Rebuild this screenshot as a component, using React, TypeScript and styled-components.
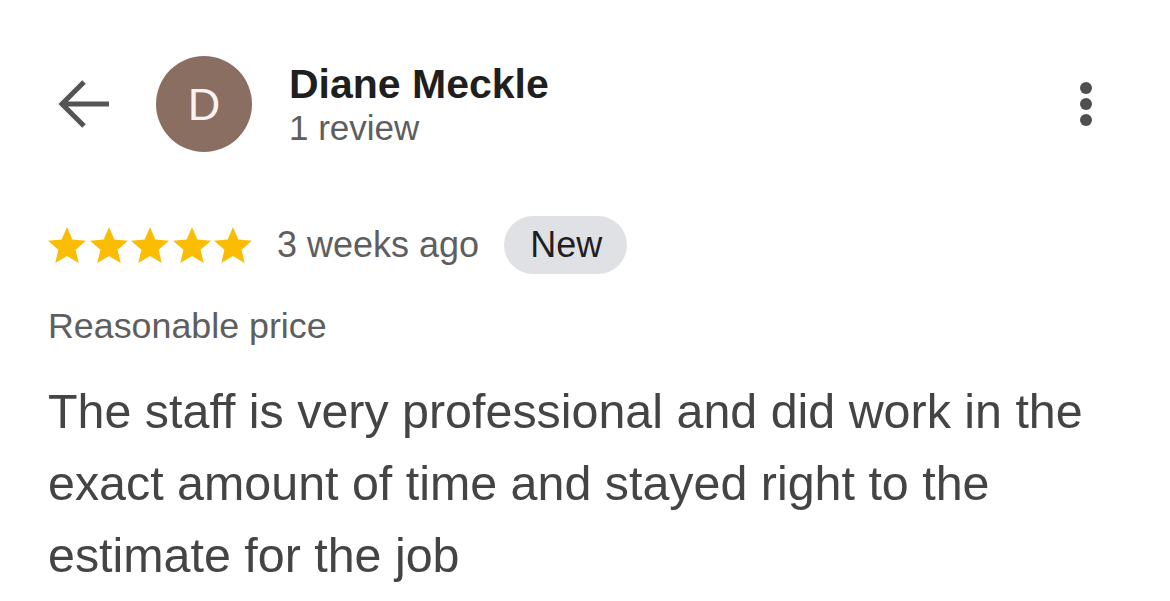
import React from 'react';
import styled, { createGlobalStyle } from 'styled-components';

const GlobalStyle = createGlobalStyle`
  html, body {
    margin: 0;
    padding: 0;
    background: #ffffff;
  }
  body {
    font-family: 'Liberation Sans', Arial, Helvetica, sans-serif;
  }
`;

const Page = styled.div`
  width: 1170px;
  height: 601px;
  overflow: hidden;
  background: #ffffff;
  box-sizing: border-box;
  padding: 56px 0 0 48px;
`;

const Header = styled.header`
  display: flex;
  align-items: center;
  height: 96px;
  padding-right: 72px;
`;

const BackButton = styled.button`
  display: flex;
  align-items: center;
  justify-content: center;
  width: 72px;
  height: 72px;
  padding: 0;
  margin-right: 36px;
  border: none;
  background: none;
  color: #545454;
`;

const Avatar = styled.div`
  flex: none;
  display: flex;
  align-items: center;
  justify-content: center;
  width: 96px;
  height: 96px;
  border-radius: 50%;
  background: #8b6e62;
  color: #f8f3f0;
  font-size: 45px;
  line-height: 1;
`;

const Who = styled.div`
  display: flex;
  flex-direction: column;
  margin-left: 37px;
`;

const Name = styled.div`
  font-size: 41px;
  line-height: 48px;
  font-weight: 700;
  color: #1f1f1f;
`;

const Count = styled.div`
  font-size: 35px;
  line-height: 40px;
  color: #5e5e5e;
`;

const MoreButton = styled.button`
  margin-left: auto;
  display: flex;
  flex-direction: column;
  align-items: center;
  gap: 4px;
  width: 24px;
  padding: 0;
  border: none;
  background: none;
`;

const Dot = styled.span`
  width: 12px;
  height: 12px;
  border-radius: 50%;
  background: #4f4f4f;
`;

const MetaRow = styled.div`
  display: flex;
  align-items: center;
  margin-top: 64px;
  height: 58px;
`;

const Stars = styled.div`
  display: flex;
  gap: 3.5px;
  margin-right: 25px;
`;

const When = styled.span`
  font-size: 36px;
  line-height: 40px;
  color: #5e5e5e;
  margin-right: 25px;
`;

const Chip = styled.span`
  display: inline-flex;
  align-items: center;
  height: 58px;
  padding: 0 25px 0 26px;
  border-radius: 29px;
  background: #dfe1e5;
  color: #1f1f1f;
  font-size: 36px;
`;

const Tag = styled.div`
  margin-top: 30px;
  font-size: 35.8px;
  line-height: 44px;
  color: #5e5e5e;
`;

const Body = styled.p`
  margin: 27px 0 0;
  padding-right: 48px;
  font-size: 48.4px;
  line-height: 72px;
  color: #444444;
`;

function Star() {
  return (
    <svg width="38" height="36" viewBox="2 2 20 19" aria-hidden>
      <path
        fill="#fbbc04"
        d="M12 17.27L18.18 21l-1.64-7.03L22 9.24l-7.19-.61L12 2 9.19 8.63 2 9.24l5.46 4.73L5.82 21z"
      />
    </svg>
  );
}

export default function App() {
  return (
    <>
      <GlobalStyle />
      <Page>
        <Header>
          <BackButton aria-label="Back">
            <svg width="54" height="50" viewBox="0 0 54 50" fill="none">
              <path
                d="M52 25H8M27 3L5 25l22 22"
                stroke="currentColor"
                strokeWidth="5"
              />
            </svg>
          </BackButton>
          <Avatar>D</Avatar>
          <Who>
            <Name>Diane Meckle</Name>
            <Count>1 review</Count>
          </Who>
          <MoreButton aria-label="More">
            <Dot />
            <Dot />
            <Dot />
          </MoreButton>
        </Header>

        <MetaRow>
          <Stars>
            {[0, 1, 2, 3, 4].map((i) => (
              <Star key={i} />
            ))}
          </Stars>
          <When>3 weeks ago</When>
          <Chip>New</Chip>
        </MetaRow>

        <Tag>Reasonable price</Tag>

        <Body>
          The staff is very professional and did work in the exact amount of
          time and stayed right to the estimate for the job
        </Body>
      </Page>
    </>
  );
}
